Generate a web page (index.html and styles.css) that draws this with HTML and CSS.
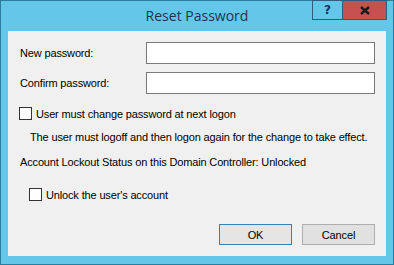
FILE: index.html
```html
<!DOCTYPE html>
<html>
<head>
<meta charset="utf-8">
<link rel="stylesheet" href="styles.css">
</head>
<body>
<div class="window">
  <div class="titlebar">
    <div class="spacer"></div>
    <div class="title">Reset Password</div>
    <div class="caption">
      <div class="cap-btn help">?</div>
      <div class="cap-btn close"><svg width="10" height="9" viewBox="0 0 10 9"><path d="M1 1 L9 8 M9 1 L1 8" stroke="#1b1b1b" stroke-width="2.4" fill="none"/></svg></div>
    </div>
  </div>
  <div class="client">
    <div class="form-row"><span class="lbl">New password:</span><span class="field"></span></div>
    <div class="form-row"><span class="lbl">Confirm password:</span><span class="field"></span></div>
    <div class="chk-row first"><span class="box"></span><span>User must change password at next logon</span></div>
    <div class="note">The user must logoff and then logon again for the change to take effect.</div>
    <div class="status">Account Lockout Status on this Domain Controller: Unlocked</div>
    <div class="chk-row second"><span class="box"></span><span>Unlock the user's account</span></div>
    <div class="buttons">
      <div class="btn default">OK</div>
      <div class="btn">Cancel</div>
    </div>
  </div>
</div>
</body>
</html>
```
FILE: styles.css
```css
html, body {
  margin: 0;
  padding: 0;
  background: #ffffff;
}
.window {
  width: 394px;
  height: 265px;
  box-sizing: border-box;
  border: 1px solid #2a7d9e;
  background: #62c7e8;
  padding: 0 7px 8px 7px;
  display: flex;
  flex-direction: column;
  font-family: "Liberation Sans", Arial, sans-serif;
  font-size: 11px;
  letter-spacing: -0.15px;
  color: #000;
}
.titlebar {
  height: 30px;
  display: grid;
  grid-template-columns: 1fr auto 1fr;
  align-items: start;
}
.title {
  font-family: "Open Sans", "Noto Sans", sans-serif;
  font-size: 14px;
  letter-spacing: 0;
  color: #1c3650;
  line-height: 30px;
}
.caption {
  display: flex;
  justify-content: flex-end;
  margin-top: -1px;
  margin-right: -1px;
}
.cap-btn {
  height: 20px;
  box-sizing: border-box;
  border: 1px solid #2d5f7c;
  display: flex;
  align-items: center;
  justify-content: center;
}
.help {
  width: 30px;
  background: #62c7e8;
  border-right: none;
  font-family: "DejaVu Sans", sans-serif;
  font-weight: bold;
  font-size: 12px;
  letter-spacing: 0;
  color: #1c2f5c;
}
.close {
  width: 45px;
  background: #c75050;
}
.client {
  flex: 1;
  background: #f0f0f0;
  padding: 11px 11px 11px 0;
  display: flex;
  flex-direction: column;
  white-space: nowrap;
}
.form-row {
  display: flex;
  align-items: center;
  height: 22px;
  padding-left: 12px;
  margin-bottom: 8px;
}
.lbl {
  width: 126px;
}
.field {
  width: 230px;
  height: 22px;
  box-sizing: border-box;
  border: 1px solid #7a7a7a;
  background: #ffffff;
}
.chk-row {
  display: flex;
  align-items: center;
  height: 13px;
  gap: 4px;
}
.chk-row.first {
  margin-top: 5px;
  padding-left: 11px;
}
.chk-row.second {
  margin-top: 19px;
  padding-left: 21px;
}
.box {
  width: 13px;
  height: 13px;
  box-sizing: border-box;
  border: 1px solid #333333;
  background: #ffffff;
}
.note {
  margin-top: 11px;
  padding-left: 22px;
  line-height: 13px;
}
.status {
  margin-top: 12px;
  padding-left: 12px;
  line-height: 13px;
}
.buttons {
  margin-top: auto;
  display: flex;
  justify-content: flex-end;
  gap: 10px;
}
.btn {
  width: 73px;
  height: 21px;
  box-sizing: border-box;
  border: 1px solid #adadad;
  background: #e1e1e1;
  display: flex;
  align-items: center;
  justify-content: center;
}
.btn.default {
  border-color: #3c7fb1;
  background: #e5e5e5;
}
```
